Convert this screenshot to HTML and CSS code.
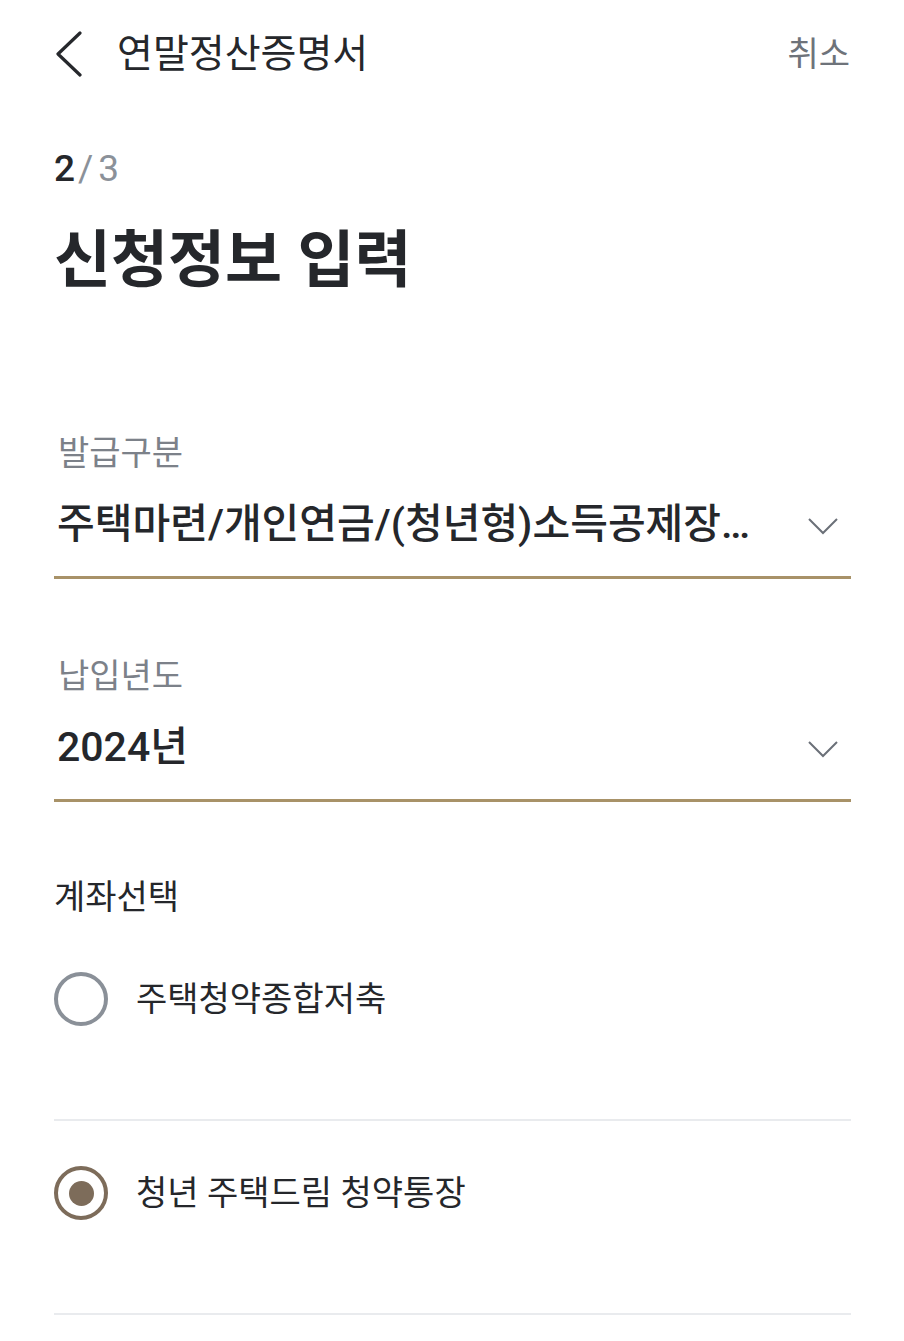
FILE: index.html
```html
<!DOCTYPE html>
<html lang="ko">

<head>
    <meta charset="UTF-8">
    <meta name="viewport" content="width=device-width, initial-scale=1.0">
    <title>연말정산증명서</title>
    <link rel="stylesheet" href="styles.css">
</head>

<body>

    <header class="top-bar">
        <button type="button" class="back-btn" aria-label="뒤로">
            <svg width="28" height="46" viewBox="0 0 28 46">
                <polyline points="25,2 3,23 25,44" fill="none" stroke="#26282c" stroke-width="3.2" stroke-linecap="round" stroke-linejoin="round" />
            </svg>
        </button>
        <h1 class="top-title">연말정산증명서</h1>
        <button type="button" class="cancel-btn">취소</button>
    </header>

    <main class="page">
        <p class="step"><span class="step-now">2</span><span class="step-total">/3</span></p>
        <h2 class="page-title">신청정보 입력</h2>

        <div class="field field-first">
            <label class="field-label">발급구분</label>
            <div class="select-row">
                <span class="select-value">주택마련/개인연금/(청년형)소득공제장기펀드</span>
                <svg class="select-arrow" width="32" height="18" viewBox="0 0 32 18">
                    <polyline points="2,2 16,16 30,2" fill="none" stroke="#6b7078" stroke-width="2" />
                </svg>
            </div>
        </div>

        <div class="field">
            <label class="field-label">납입년도</label>
            <div class="select-row">
                <span class="select-value">2024년</span>
                <svg class="select-arrow" width="32" height="18" viewBox="0 0 32 18">
                    <polyline points="2,2 16,16 30,2" fill="none" stroke="#6b7078" stroke-width="2" />
                </svg>
            </div>
        </div>

        <h3 class="group-title">계좌선택</h3>
        <ul class="account-list">
            <li class="account-item">
                <span class="radio"></span>
                <span class="account-name">주택청약종합저축</span>
            </li>
            <li class="account-item">
                <span class="radio radio-checked"></span>
                <span class="account-name">청년 주택드림 청약통장</span>
            </li>
        </ul>
    </main>

</body>

</html>
```

FILE: styles.css
```css
body {
    margin: 0;
    background: #fff;
    color: #25272b;
    font-family: Roboto, "Noto Sans CJK KR", sans-serif;
}

button {
    font-family: inherit;
    background: none;
    border: none;
    padding: 0;
    cursor: pointer;
}

.top-bar {
    height: 107px;
    display: flex;
    align-items: center;
    padding: 0 54px 0 55px;
}

.back-btn {
    display: flex;
    width: 28px;
    height: 46px;
}

.top-title {
    flex: 1;
    margin: 0 0 0 34px;
    font-size: 39px;
    font-weight: 400;
    line-height: 50px;
    color: #25272b;
}

.cancel-btn {
    font-size: 34px;
    line-height: 44px;
    color: #6e737a;
}

.page {
    padding: 0 53px 0 54px;
}

.step {
    margin: 42px 0 0;
    font-size: 37px;
    line-height: 40px;
}

.step-now {
    color: #25272b;
    font-weight: 500;
}

.step-total {
    color: #8b9199;
    padding-left: 3px;
    letter-spacing: 5px;
}

.page-title {
    margin: 37px 0 0;
    font-size: 62px;
    font-weight: 700;
    line-height: 70px;
}

.field {
    margin-top: 75px;
    border-bottom: 3px solid #a89268;
    padding-bottom: 27px;
}

.field-first {
    margin-top: 135px;
}

.field-label {
    display: block;
    padding-left: 4px;
    font-size: 34px;
    line-height: 44px;
    color: #7c8189;
}

.select-row {
    display: flex;
    align-items: center;
    margin-top: 24px;
    padding-left: 3px;
}

.select-value {
    flex: 1;
    min-width: 0;
    overflow: hidden;
    white-space: nowrap;
    text-overflow: ellipsis;
    font-size: 41px;
    font-weight: 500;
    line-height: 50px;
    color: #25272b;
    margin-right: 30px;
}

.select-arrow {
    flex-shrink: 0;
    margin: 4px 12px 0 0;
}

.group-title {
    margin: 73px 0 0;
    font-size: 34px;
    font-weight: 400;
    line-height: 44px;
    color: #25272b;
}

.account-list {
    list-style: none;
    margin: 8px 0 0;
    padding: 0;
}

.account-item {
    display: flex;
    align-items: center;
    gap: 28px;
    padding: 45px 0 93px;
    border-bottom: 2px solid #e9ebee;
}

.radio {
    box-sizing: border-box;
    width: 54px;
    height: 54px;
    border: 4px solid #8a9098;
    border-radius: 50%;
    display: flex;
    align-items: center;
    justify-content: center;
}

.radio-checked {
    border-color: #7d6c5a;
}

.radio-checked::after {
    content: "";
    width: 25px;
    height: 25px;
    border-radius: 50%;
    background: #7d6c5a;
}

.account-name {
    font-size: 34px;
    line-height: 44px;
    color: #25272b;
}
```
